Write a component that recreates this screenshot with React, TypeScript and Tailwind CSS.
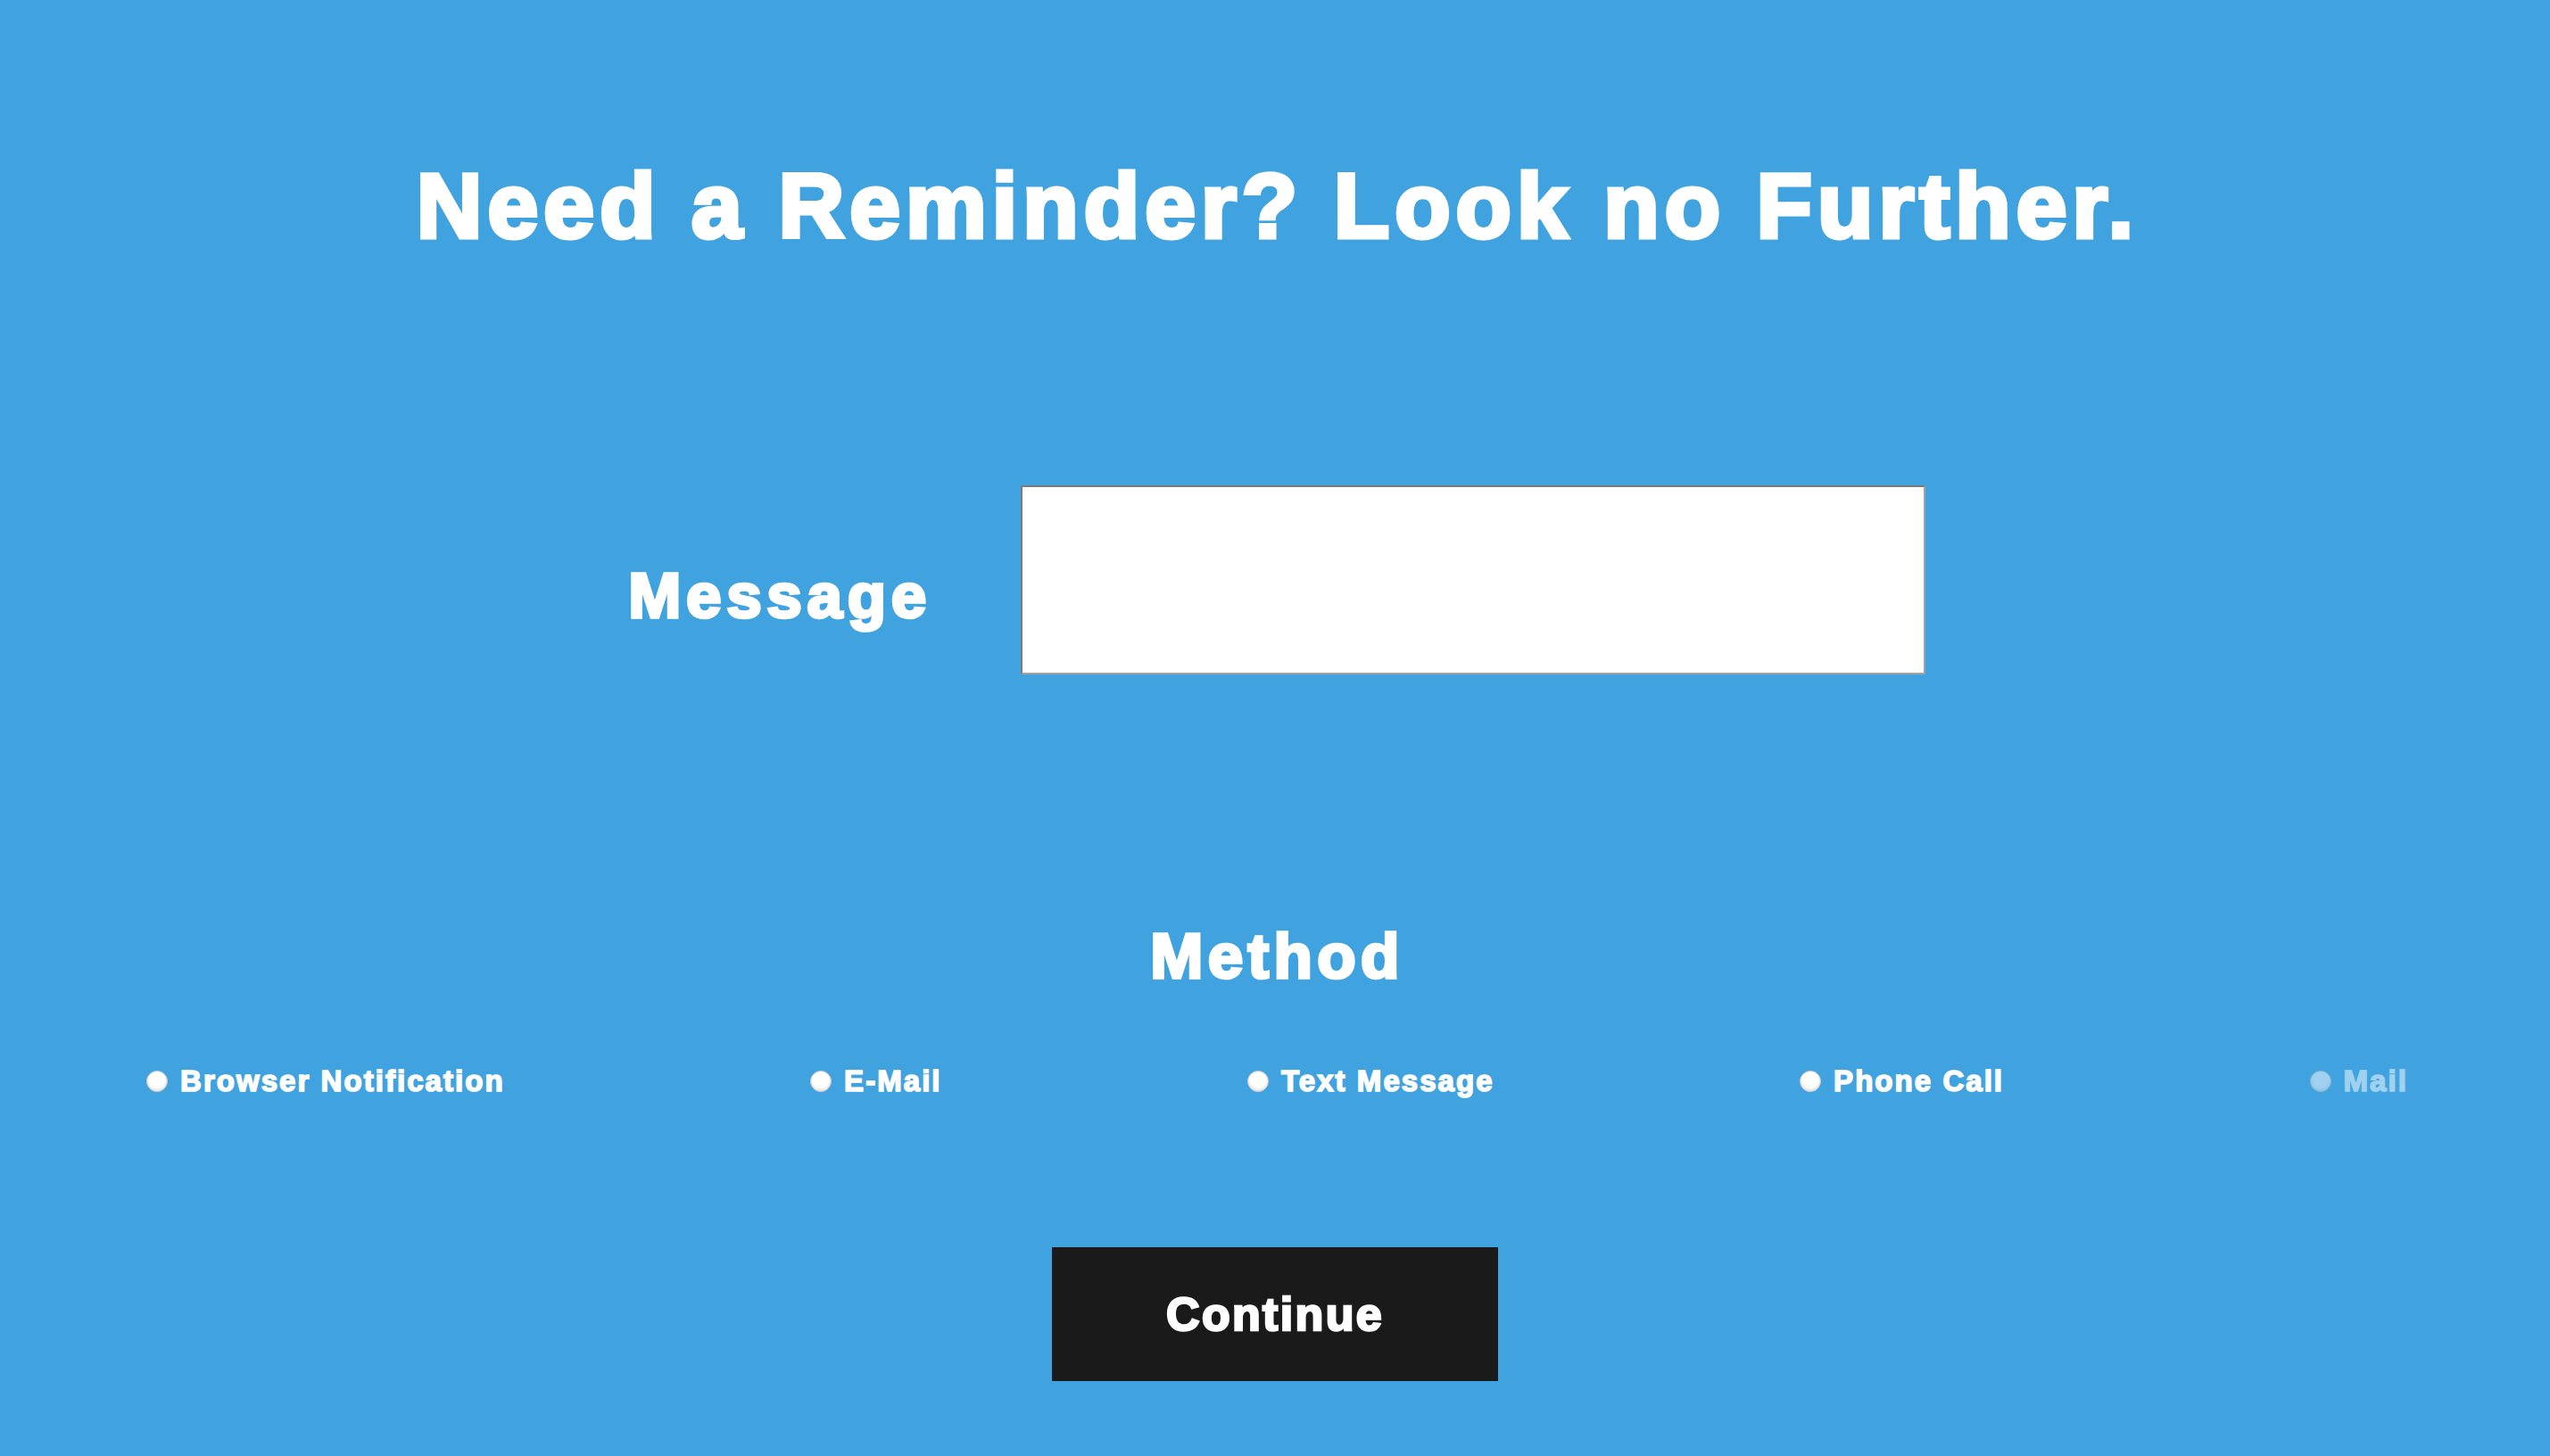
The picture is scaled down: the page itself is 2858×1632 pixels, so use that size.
import React, { useState } from "react";

const methods = [
  { id: "browser", label: "Browser Notification" },
  { id: "email", label: "E-Mail" },
  { id: "text", label: "Text Message" },
  { id: "phone", label: "Phone Call" },
  { id: "mail", label: "Mail", disabled: true },
];

const App = () => {
  const [message, setMessage] = useState("");
  const [method, setMethod] = useState("");

  return (
    <main className="min-h-screen w-full bg-[#40a3e0] font-['Liberation_Sans',Arial,sans-serif] font-bold text-white">
      <h1 className="pt-[180px] pl-[6px] text-center text-[102px] leading-none tracking-[0.06em] [-webkit-text-stroke:5px_white]">
        Need a Reminder? Look no Further.
      </h1>

      <section className="mt-[262px] flex items-start justify-center gap-[100px] pl-[4px]">
        <label
          htmlFor="message"
          className="mt-[88px] text-[71px] leading-none tracking-[0.08em] [-webkit-text-stroke:3.5px_white]"
        >
          Message
        </label>
        <textarea
          id="message"
          value={message}
          onChange={(e) => setMessage(e.target.value)}
          className="h-[212px] w-[1014px] resize-none border-2 border-t-[#7b7b7b] border-l-[#7b7b7b] border-b-[#a2a2a2] border-r-[#a2a2a2] bg-white p-3 text-[40px] text-black outline-none"
        />
      </section>

      <h2 className="mt-[280px] pl-[5px] text-center text-[71px] leading-none tracking-[0.075em] [-webkit-text-stroke:3.5px_white]">
        Method
      </h2>

      <div className="mt-[88px] flex items-center justify-between pl-[164px] pr-[159px]">
        {methods.map((m) => (
          <label
            key={m.id}
            className={
              m.disabled
                ? "flex items-center gap-[14px] opacity-50"
                : "flex cursor-pointer items-center gap-[14px]"
            }
          >
            <input
              type="radio"
              name="method"
              value={m.id}
              disabled={m.disabled}
              checked={method === m.id}
              onChange={() => setMethod(m.id)}
              className="h-[24px] w-[24px] appearance-none rounded-full border border-[#c9c9c9] bg-white shadow-[inset_0_-2px_3px_rgba(0,0,0,0.12)] checked:border-[7px] checked:border-[#1a1a1a]"
            />
            <span className="text-[33px] leading-none tracking-[0.062em] [-webkit-text-stroke:1.6px_white]">
              {m.label}
            </span>
          </label>
        ))}
      </div>

      <div className="mt-[170px] flex justify-center pb-[80px]">
        <button
          type="button"
          className="h-[150px] w-[500px] bg-[#1a1a1a] text-[52px] leading-none tracking-[0.045em] text-white [-webkit-text-stroke:2.5px_white]"
        >
          Continue
        </button>
      </div>
    </main>
  );
};

export default App;
